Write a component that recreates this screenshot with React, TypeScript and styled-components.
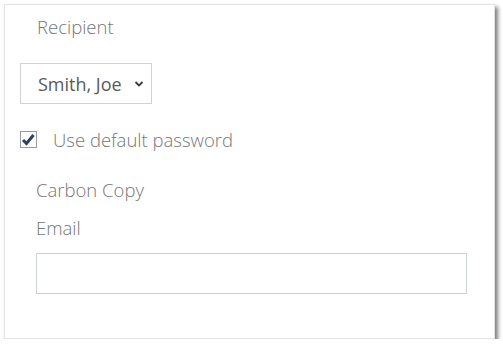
import styled, { createGlobalStyle } from "styled-components";

const Global = createGlobalStyle`
  html, body {
    margin: 0;
    background: #ffffff;
    font-family: "Open Sans", "Liberation Sans", sans-serif;
  }
`;

const Card = styled.div`
  margin: 4px 0 0 4px;
  width: 491px;
  height: 335px;
  box-sizing: border-box;
  background: #ffffff;
  border: 1px solid #e4e4e4;
  box-shadow: 3px 3px 4px rgba(0, 0, 0, 0.5);
  padding: 10px 0 0 15px;
  display: flex;
  flex-direction: column;
`;

const Label = styled.div<{ $indent?: number }>`
  padding-left: ${(p) => p.$indent ?? 17}px;
  font-size: 18.5px;
  font-weight: 300;
  color: #767676;
  line-height: 24px;
`;

const SelectBox = styled.div`
  margin-top: 24px;
  width: 132px;
  height: 41px;
  box-sizing: border-box;
  border: 1px solid #cfd3d8;
  display: flex;
  align-items: center;
  justify-content: space-between;
  padding: 0 6px 0 17px;
  font-size: 18px;
  color: #5a5a5a;
`;

const CheckRow = styled.label`
  margin-top: 23px;
  display: flex;
  align-items: center;
  gap: 16px;
  font-size: 18.5px;
  font-weight: 300;
  color: #767676;
`;

const Box = styled.span`
  width: 17px;
  height: 17px;
  box-sizing: border-box;
  border: 1px solid #9a9a9a;
  background: #ffffff;
  display: flex;
  align-items: center;
  justify-content: center;
`;

const Section = styled.div`
  margin-top: 26px;
  display: flex;
  flex-direction: column;
  gap: 14px;
`;

const TextInput = styled.input`
  margin: 13px 0 0 16px;
  width: 431px;
  height: 41px;
  box-sizing: border-box;
  border: 1px solid #cdd2da;
  outline: none;
  font-size: 16px;
`;

export default function App() {
  return (
    <>
      <Global />
      <Card>
        <Label>Recipient</Label>
        <SelectBox>
          <span>Smith, Joe</span>
          <svg width="12" height="10" viewBox="0 0 12 10">
            <path d="M2.5 3 L6 6.5 L9.5 3" fill="none" stroke="#3a3a3a" strokeWidth="1.8" />
          </svg>
        </SelectBox>
        <CheckRow>
          <Box>
            <svg width="15" height="15" viewBox="0 0 15 15">
              <path d="M2 8 L5.5 11.5 L12.5 3" fill="none" stroke="#2c4263" strokeWidth="3" />
            </svg>
          </Box>
          Use default password
        </CheckRow>
        <Section>
          <Label $indent={16}>Carbon Copy</Label>
          <Label $indent={16}>Email</Label>
        </Section>
        <TextInput type="text" />
      </Card>
    </>
  );
}
